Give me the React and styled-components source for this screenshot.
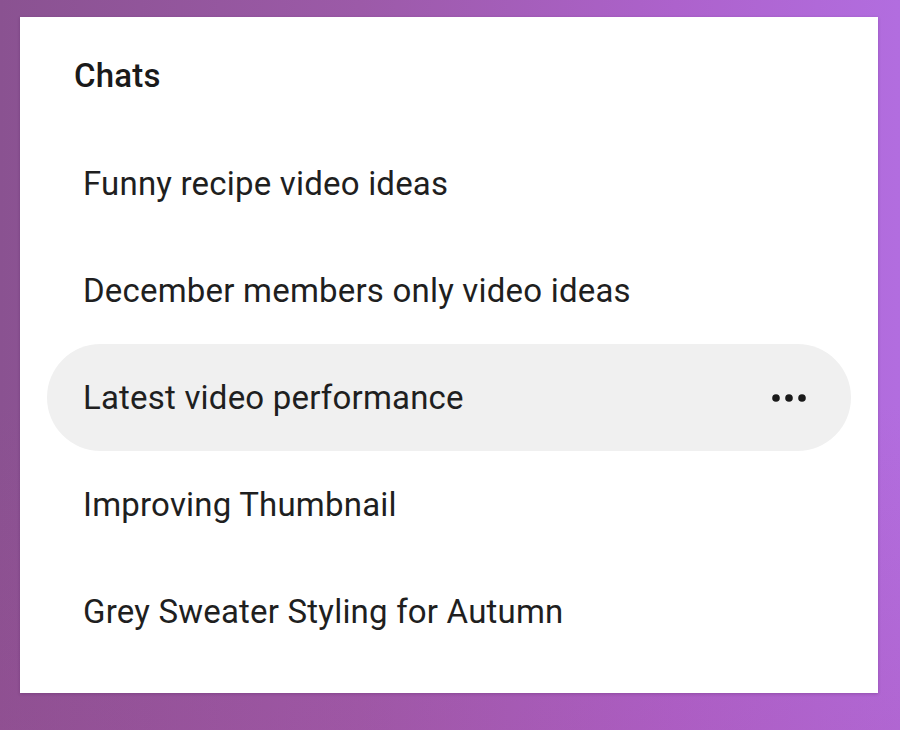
import React from 'react';
import styled, { createGlobalStyle } from 'styled-components';

const GlobalStyle = createGlobalStyle`
  html, body {
    margin: 0;
    padding: 0;
  }
  body {
    font-family: Roboto, "Noto Sans", Arial, sans-serif;
    color: #1f1f1f;
  }
`;

const chats = [
  { id: 1, title: 'Funny recipe video ideas' },
  { id: 2, title: 'December members only video ideas' },
  { id: 3, title: 'Latest video performance', active: true },
  { id: 4, title: 'Improving Thumbnail' },
  { id: 5, title: 'Grey Sweater Styling for Autumn' },
];

const App = () => {
  return (
    <>
      <GlobalStyle />
      <Backdrop>
        <Panel>
          <Title>Chats</Title>
          <ChatList>
            {chats.map((chat) => (
              <ChatItem key={chat.id} $active={chat.active}>
                <ChatTitle>{chat.title}</ChatTitle>
                {chat.active && (
                  <MoreButton aria-label='More options'>
                    <svg width='38' height='10' viewBox='0 0 38 10'>
                      <circle cx='5' cy='5' r='3.8' fill='#1a1a1a' />
                      <circle cx='18' cy='5' r='3.8' fill='#1a1a1a' />
                      <circle cx='31' cy='5' r='3.8' fill='#1a1a1a' />
                    </svg>
                  </MoreButton>
                )}
              </ChatItem>
            ))}
          </ChatList>
        </Panel>
      </Backdrop>
    </>
  );
};

export default App;

const Backdrop = styled.div`
  width: 900px;
  height: 730px;
  box-sizing: border-box;
  padding: 17px 22px 0 20px;
  background:
    linear-gradient(180deg, rgba(255, 255, 255, 0) 55%, rgba(170, 70, 150, 0.18) 100%),
    linear-gradient(90deg, #8a5291 0%, #9c5aa8 40%, #ad62cc 75%, #b26ddf 100%);
  overflow: hidden;
`;

const Panel = styled.section`
  width: 858px;
  height: 676px;
  box-sizing: border-box;
  background: #ffffff;
  padding: 0 27px;
  box-shadow: 0 1px 3px rgba(60, 20, 70, 0.25);
`;

const Title = styled.h2`
  margin: 0;
  padding: 39px 0 34px 27px;
  font-size: 33px;
  line-height: 40px;
  font-weight: 500;
  letter-spacing: 0.2px;
  color: #1a1a1a;
`;

const ChatList = styled.ul`
  list-style: none;
  margin: 0;
  padding: 0;
`;

const ChatItem = styled.li`
  display: flex;
  align-items: center;
  height: 107px;
  padding: 0 42px 0 36px;
  border-radius: 54px;
  background: ${({ $active }) => ($active ? '#f0f0f0' : 'transparent')};
`;

const ChatTitle = styled.span`
  flex: 1;
  font-size: 33px;
  letter-spacing: 0.2px;
  color: #1f1f1f;
  white-space: nowrap;
`;

const MoreButton = styled.button`
  display: flex;
  align-items: center;
  padding: 0;
  border: none;
  background: none;
  cursor: pointer;
`;
